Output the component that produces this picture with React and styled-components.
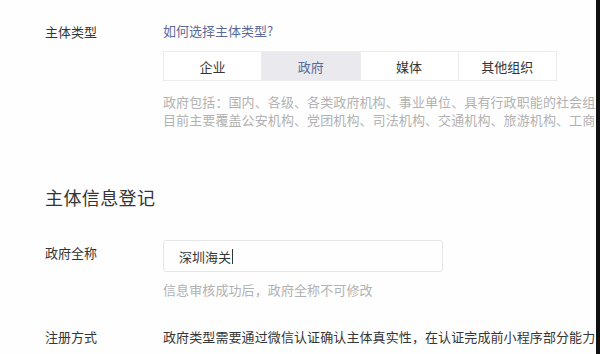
import styled, { createGlobalStyle } from "styled-components";

const GlobalStyle = createGlobalStyle`
  html, body {
    margin: 0;
    padding: 0;
    background: #fff;
  }
  body {
    font-family: "Noto Sans CJK SC", "Noto Sans", sans-serif;
  }
`;

const Page = styled.div`
  display: flex;
  width: 600px;
  height: 354px;
  overflow: hidden;
  background: #fefefe;
`;

const Content = styled.div`
  flex: 1;
  min-width: 0;
  overflow: hidden;
  padding: 23px 0 0 45px;
  white-space: nowrap;
`;

const Edge = styled.div`
  width: 4px;
  flex: none;
  background: #111;
`;

const FormRow = styled.div`
  display: grid;
  grid-template-columns: 118px 1fr;
  margin-top: ${(p) => p.$gap || 0}px;
`;

const Label = styled.div`
  font-size: 13px;
  line-height: 18px;
  color: #353535;
  padding-top: ${(p) => p.$offset || 0}px;
`;

const Field = styled.div`
  min-width: 0;
`;

const HelpLink = styled.a`
  display: block;
  font-size: 13px;
  line-height: 18px;
  color: #5b6a9a;
  text-decoration: none;
  margin-top: -1px;
`;

const Segmented = styled.div`
  display: flex;
  width: 394px;
  height: 30px;
  margin-top: 11px;
  border: 1px solid #ececef;
  box-sizing: border-box;
`;

const Segment = styled.div`
  flex: 1;
  display: flex;
  align-items: center;
  justify-content: center;
  font-size: 13px;
  color: ${(p) => (p.$active ? "#5b6a9a" : "#353535")};
  background: ${(p) => (p.$active ? "#e9e9ee" : "#fff")};
  & + & {
    border-left: 1px solid #ececef;
  }
`;

const Desc = styled.div`
  margin-top: ${(p) => p.$gap || 0}px;
  font-size: 13px;
  line-height: 18px;
  letter-spacing: 0.1px;
  color: #b2b2b2;
`;

const SectionTitle = styled.h2`
  margin: 56px 0 0;
  font-size: 18px;
  font-weight: 400;
  line-height: 24px;
  letter-spacing: 0.4px;
  color: #353535;
`;

const InputBox = styled.div`
  width: 280px;
  height: 32px;
  box-sizing: border-box;
  border: 1px solid #e7e7eb;
  border-radius: 3px;
  padding: 0 15px;
  display: flex;
  align-items: center;
  font-size: 13px;
  color: #353535;
`;

const Caret = styled.span`
  display: inline-block;
  width: 1px;
  height: 15px;
  margin-left: 1px;
  background: #353535;
`;

const Body = styled.div`
  font-size: 13px;
  line-height: 18px;
  letter-spacing: 0.1px;
  color: #353535;
`;

const segments = ["企业", "政府", "媒体", "其他组织"];

export default function App() {
  return (
    <>
      <GlobalStyle />
      <Page>
        <Content>
          <FormRow>
            <Label>主体类型</Label>
            <Field>
              <HelpLink href="#">如何选择主体类型?</HelpLink>
              <Segmented>
                {segments.map((s) => (
                  <Segment key={s} $active={s === "政府"}>
                    {s}
                  </Segment>
                ))}
              </Segmented>
              <Desc $gap={12}>
                政府包括：国内、各级、各类政府机构、事业单位、具有行政职能的社会组
                <br />
                目前主要覆盖公安机构、党团机构、司法机构、交通机构、旅游机构、工商
              </Desc>
            </Field>
          </FormRow>

          <SectionTitle>主体信息登记</SectionTitle>

          <FormRow $gap={31}>
            <Label $offset={4}>政府全称</Label>
            <Field>
              <InputBox>
                深圳海关
                <Caret />
              </InputBox>
              <Desc $gap={9}>信息审核成功后，政府全称不可修改</Desc>
            </Field>
          </FormRow>

          <FormRow $gap={29}>
            <Label>注册方式</Label>
            <Body>
              政府类型需要通过微信认证确认主体真实性，在认证完成前小程序部分能力
            </Body>
          </FormRow>
        </Content>
        <Edge />
      </Page>
    </>
  );
}
